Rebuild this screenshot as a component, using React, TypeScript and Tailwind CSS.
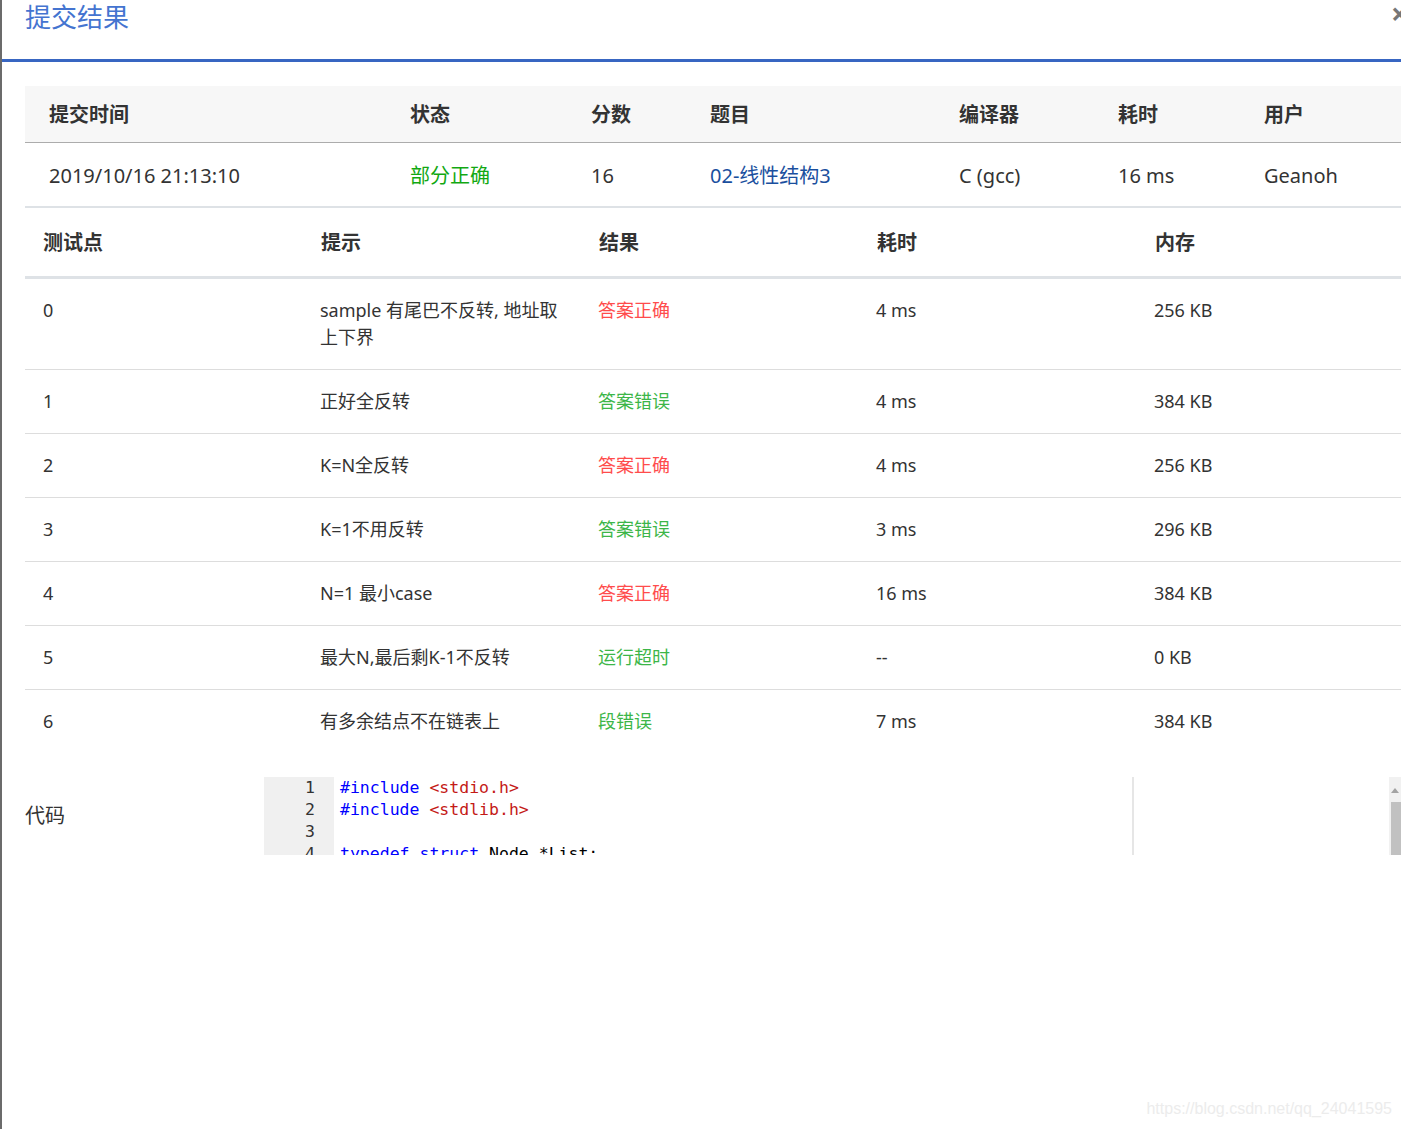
import React from 'react';

const summaryCols = ['w-[385px]', 'w-[181px]', 'w-[119px]', 'w-[249px]', 'w-[159px]', 'w-[146px]', 'w-[151px]'];

const summaryHead = ['提交时间', '状态', '分数', '题目', '编译器', '耗时', '用户'];

type Verdict = 'ok' | 'bad';

const cases: { id: string; hint: React.ReactNode; result: string; kind: Verdict; time: string; mem: string }[] = [
  { id: '0', hint: <>sample 有尾巴不反转, 地址取<br />上下界</>, result: '答案正确', kind: 'ok', time: '4 ms', mem: '256 KB' },
  { id: '1', hint: '正好全反转', result: '答案错误', kind: 'bad', time: '4 ms', mem: '384 KB' },
  { id: '2', hint: 'K=N全反转', result: '答案正确', kind: 'ok', time: '4 ms', mem: '256 KB' },
  { id: '3', hint: 'K=1不用反转', result: '答案错误', kind: 'bad', time: '3 ms', mem: '296 KB' },
  { id: '4', hint: 'N=1 最小case', result: '答案正确', kind: 'ok', time: '16 ms', mem: '384 KB' },
  { id: '5', hint: '最大N,最后剩K-1不反转', result: '运行超时', kind: 'bad', time: '--', mem: '0 KB' },
  { id: '6', hint: '有多余结点不在链表上', result: '段错误', kind: 'bad', time: '7 ms', mem: '384 KB' },
];

const codeLines: React.ReactNode[] = [
  <><span className="text-[#0000ff]">#include</span> <span className="text-[#c41a16]">&lt;stdio.h&gt;</span></>,
  <><span className="text-[#0000ff]">#include</span> <span className="text-[#c41a16]">&lt;stdlib.h&gt;</span></>,
  <>&nbsp;</>,
  <><span className="text-[#0000ff]">typedef</span> <span className="text-[#0000ff]">struct</span> Node *List;</>,
];

function SummaryTable() {
  return (
    <div className="w-[1390px] text-[20px] leading-[30px] text-[#333]">
      <div className="flex bg-[#f7f7f7] border-b border-[#acacac] pt-[14px] pb-[12px] font-bold">
        {summaryHead.map((h, i) => (
          <div key={h} className={`${summaryCols[i]} shrink-0 ${i === 0 ? 'pl-6' : ''}`}>
            {h}
          </div>
        ))}
      </div>
      <div className="flex pt-[18px] pb-[15px] border-b-2 border-[#dee2e6]">
        <div className={`${summaryCols[0]} shrink-0 pl-6`}>2019/10/16 21:13:10</div>
        <div className={`${summaryCols[1]} shrink-0 text-[#12a812]`}>部分正确</div>
        <div className={`${summaryCols[2]} shrink-0`}>16</div>
        <div className={`${summaryCols[3]} shrink-0 text-[#1a4f9e]`}>02-线性结构3</div>
        <div className={`${summaryCols[4]} shrink-0`}>C (gcc)</div>
        <div className={`${summaryCols[5]} shrink-0`}>16 ms</div>
        <div className={`${summaryCols[6]} shrink-0`}>Geanoh</div>
      </div>
    </div>
  );
}

function CasesTable() {
  const cell = 'w-[278px] shrink-0 pl-[18px] pr-[10px]';
  return (
    <div className="w-[1390px] text-[#333]">
      <div className="flex border-b-[3px] border-[#dee2e6] pt-[20px] pb-[18px] text-[20px] leading-[30px] font-bold">
        {['测试点', '提示', '结果', '耗时', '内存'].map((h) => (
          <div key={h} className={cell}>{h}</div>
        ))}
      </div>
      {cases.map((c, i) => (
        <div
          key={c.id}
          className={`flex py-[18px] text-[18px] leading-[27px] ${i < cases.length - 1 ? 'border-b border-[#dddddd]' : ''}`}
        >
          <div className={cell}>{c.id}</div>
          <div className={`${cell} -ml-px`}>{c.hint}</div>
          <div className={`${cell} ${c.kind === 'ok' ? 'text-[#ff4c4c]' : 'text-[#3cb648]'}`}>{c.result}</div>
          <div className={cell}>{c.time}</div>
          <div className={cell}>{c.mem}</div>
        </div>
      ))}
    </div>
  );
}

function CodeBlock() {
  return (
    <div className="flex items-center mt-6">
      <div className="w-[239px] shrink-0 text-[20px] leading-[30px] text-[#333]">代码</div>
      <div className="relative flex-1 h-[78px] overflow-hidden flex font-['DejaVu_Sans_Mono',monospace] text-[16.5px] leading-[22px]">
        <div className="w-[70px] shrink-0 bg-[#f0f0f0] pr-[19px] text-right text-[#333]">
          {codeLines.map((_, i) => (
            <div key={i}>{i + 1}</div>
          ))}
        </div>
        <div className="flex-1 pl-[6px] text-[#000] whitespace-pre">
          {codeLines.map((l, i) => (
            <div key={i}>{l}</div>
          ))}
        </div>
        {/* print margin */}
        <div className="absolute left-[868px] top-0 h-full w-[2px] bg-[#e6e6e6]" />
        {/* scrollbar */}
        <div className="w-[12px] shrink-0 flex flex-col bg-[#f1f1f1]">
          <div className="h-[25px] flex items-center justify-center">
            <svg width="8" height="6" viewBox="0 0 8 6"><path d="M0 6 L4 1 L8 6 Z" fill="#a3a3a3" /></svg>
          </div>
          <div className="flex-1 bg-[#c1c1c1] ml-[2px]" />
        </div>
      </div>
    </div>
  );
}

export default function App() {
  return (
    <div className="relative h-[1129px] w-full overflow-hidden bg-white border-l-2 border-[#6b6b6b] font-['Noto_Sans','Noto_Sans_CJK_SC',sans-serif]">
      <div className="h-[62px] border-b-[3px] border-[#3866c2] pl-[23px] relative">
        <h1 className="text-[26px] leading-[34px] text-[#4474d0] font-normal">提交结果</h1>
        <span className="absolute left-[1389px] top-[-4px] text-[30px] leading-[36px] font-bold text-[#777]">×</span>
      </div>
      <div className="pl-[23px] pt-6">
        <SummaryTable />
        <CasesTable />
        <CodeBlock />
      </div>
      <div className="absolute right-[9px] bottom-[8px] font-['Liberation_Sans',sans-serif] text-[16px] text-[#ececec]">
        https://blog.csdn.net/qq_24041595
      </div>
    </div>
  );
}
